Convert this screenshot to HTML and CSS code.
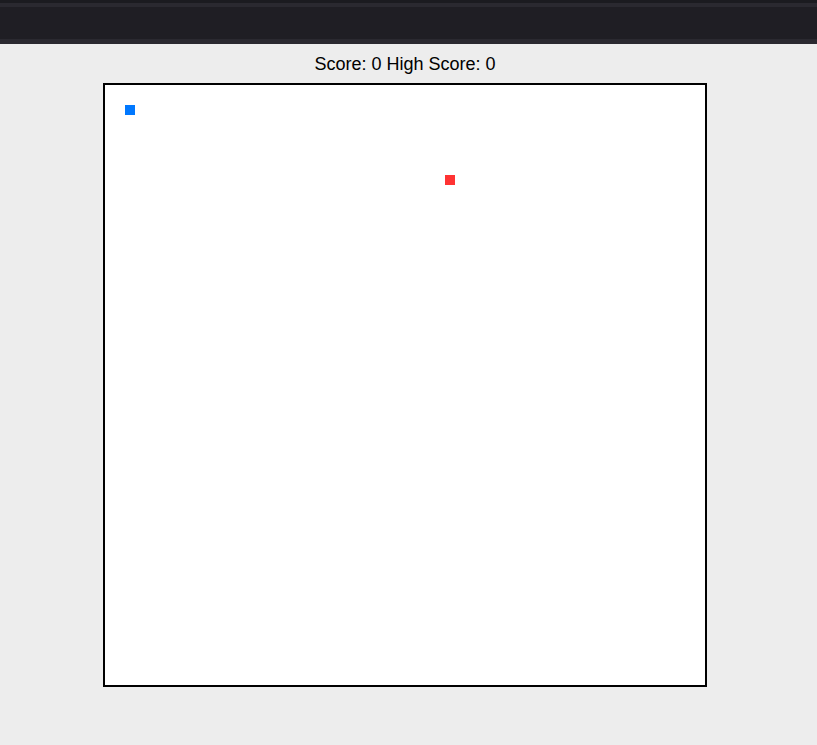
FILE: index.html
```html
<!DOCTYPE html>
<html>
<head>
<meta charset="utf-8">
<link rel="stylesheet" href="styles.css">
</head>
<body>
<div class="topbar"><div class="topbar-inner"></div></div>
<main class="game">
  <div class="score">Score: 0 High Score: 0</div>
  <div class="board">
    <div class="cell snake" style="left:20px;top:20px"></div>
    <div class="cell food" style="left:340px;top:90px"></div>
  </div>
</main>
</body>
</html>
```
FILE: styles.css
```css
html, body {
  margin: 0;
  padding: 0;
  background: #ededed;
  font-family: "Liberation Sans", Arial, sans-serif;
}
.topbar {
  height: 44px;
  box-sizing: border-box;
  background: #1f1e24;
  border-top: 3px solid #1b1b20;
}
.topbar-inner {
  height: 41px;
  box-sizing: border-box;
  border-top: 4px solid #2a2930;
  border-bottom: 5px solid #2a2930;
}
.game {
  display: flex;
  flex-direction: column;
  align-items: center;
  padding-right: 7px;
}
.score {
  margin-top: 10px;
  margin-bottom: 9px;
  font-size: 18px;
  line-height: 20px;
  color: #000;
}
.board {
  position: relative;
  width: 600px;
  height: 600px;
  background: #fff;
  border: 2px solid #000;
}
.cell {
  position: absolute;
  width: 10px;
  height: 10px;
}
.snake { background: #0078ff; }
.food { background: #ff3333; }
```
